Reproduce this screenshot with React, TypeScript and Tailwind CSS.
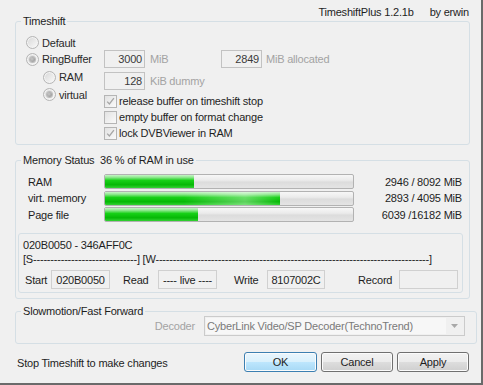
import React from "react";

function Radio({ checked }: { checked?: boolean }) {
  return (
    <span className="flex h-[13px] w-[13px] shrink-0 items-center justify-center rounded-full border border-[#b5b5b5] bg-[linear-gradient(135deg,#d6d6d6,#fbfbfb)] shadow-[inset_0_0_0_1px_#f4f4f4]">
      {checked && (
        <span className="h-[5px] w-[5px] rounded-full bg-[radial-gradient(circle_at_40%_40%,#c8c8c8,#8e8e8e)] shadow-[0_0_0_1px_#bdbdbd]" />
      )}
    </span>
  );
}

function Check({ checked }: { checked?: boolean }) {
  return (
    <span className="flex h-[13px] w-[13px] shrink-0 items-center justify-center border border-[#b5b5b5] bg-[linear-gradient(135deg,#e2e2e2,#fafafa)]">
      {checked && (
        <svg width="9" height="9" viewBox="0 0 9 9">
          <path d="M1.2 4.6 L3.4 7 L7.9 1.2" fill="none" stroke="#a6a6a6" strokeWidth="1.3" />
        </svg>
      )}
    </span>
  );
}

function Group({
  label,
  className,
  children,
}: {
  label?: string;
  className: string;
  children?: React.ReactNode;
}) {
  return (
    <div className={`relative shrink-0 rounded-[3px] border border-[#d5dfe5] ${className}`}>
      {label && (
        <span className="absolute left-[5px] top-[-8px] whitespace-pre bg-[#f0f0f0] px-[2px] leading-[14px] text-[#1e1e1e]">
          {label}
        </span>
      )}
      {children}
    </div>
  );
}

const bars = [
  { label: "RAM", pct: 36, value: "2946 / 8092 MiB", glow: false },
  { label: "virt. memory", pct: 70.6, value: "2893 / 4095 MiB", glow: true },
  { label: "Page file", pct: 37.3, value: "6039 /16182 MiB", glow: false },
];

function Button({ label, primary, w }: { label: string; primary?: boolean; w: string }) {
  const base =
    "flex h-[20px] items-center justify-center rounded-[3px] border text-[#1e1e1e] shadow-[inset_0_0_0_1px_#fbfbfb] " + w;
  const skin = primary
    ? "border-[#3c7fb1] bg-[linear-gradient(#eaf6fd_0%,#d9f0fc_50%,#bee6fd_50%,#a7d9f5_100%)]"
    : "border-[#707070] bg-[linear-gradient(#f2f2f2_0%,#ebebeb_50%,#dddddd_50%,#cfcfcf_100%)]";
  return <div className={`${base} ${skin}`}>{label}</div>;
}

export default function App() {
  const line = "[S" + "-".repeat(30) + "] [W" + "-".repeat(79) + "]";
  return (
    <div className="h-[385px] w-[483px] overflow-hidden border-b-2 border-r-2 border-[#6a6a6a] bg-[#f0f0f0] font-['Liberation_Sans',Arial,sans-serif] text-[11px] leading-[14px] tracking-[-0.2px] text-[#1e1e1e]">
      <div className="flex flex-col pl-[15px]">
        {/* Title */}
        <div className="flex h-[21px] w-[454px] justify-end pt-[5px]">
          <span>TimeshiftPlus 1.2.1b</span>
          <span className="ml-[16px]">by erwin</span>
        </div>

        {/* Timeshift */}
        <Group label="Timeshift" className="h-[124px] w-[455px]">
          <div className="flex flex-col pl-[10px] pt-[13px]">
            <div className="flex h-[15px] items-center">
              <Radio />
              <span className="ml-[3px] text-[#2a2a2a]">Default</span>
            </div>
            <div className="flex">
              <div className="flex w-[78px] flex-col">
                <div className="flex h-[18px] items-center">
                  <Radio checked />
                  <span className="ml-[3px] text-[#2a2a2a]">RingBuffer</span>
                </div>
                <div className="flex h-[18px] items-center pl-[17px]">
                  <Radio />
                  <span className="ml-[3px] text-[#2a2a2a]">RAM</span>
                </div>
                <div className="flex h-[17px] items-center pl-[17px]">
                  <Radio checked />
                  <span className="ml-[3px] text-[#2a2a2a]">virtual</span>
                </div>
              </div>
              <div className="flex flex-col">
                <div className="flex h-[18px] items-center">
                  <span className="flex h-[18px] w-[41px] items-center justify-end border border-[#c2c2c2] pr-[2px] text-[#3a3a3a]">
                    3000
                  </span>
                  <span className="ml-[5px] w-[71px] text-[#a3a3a3]">MiB</span>
                  <span className="flex h-[18px] w-[41px] items-center justify-end border border-[#c2c2c2] pr-[2px] text-[#3a3a3a]">
                    2849
                  </span>
                  <span className="ml-[4px] text-[#a3a3a3]">MiB allocated</span>
                </div>
                <div className="mt-[4px] flex h-[18px] items-center">
                  <span className="flex h-[18px] w-[41px] items-center justify-end border border-[#c2c2c2] pr-[2px] text-[#3a3a3a]">
                    128
                  </span>
                  <span className="ml-[5px] text-[#a3a3a3]">KiB dummy</span>
                </div>
                <div className="mt-[3px] flex h-[16px] items-center">
                  <Check checked />
                  <span className="ml-[2px]">release buffer on timeshift stop</span>
                </div>
                <div className="flex h-[16px] items-center">
                  <Check />
                  <span className="ml-[2px]">empty buffer on format change</span>
                </div>
                <div className="flex h-[16px] items-center">
                  <Check checked />
                  <span className="ml-[2px]">lock DVBViewer in RAM</span>
                </div>
              </div>
            </div>
          </div>
        </Group>

        {/* Memory Status */}
        <Group label="Memory Status  36 % of RAM in use" className="mt-[15px] h-[139px] w-[455px]">
          <div className="flex flex-col gap-[1.5px] pt-[13px]">
            {bars.map((b) => (
              <div key={b.label} className="flex h-[15px] items-center">
                <span className="w-[88px] pl-[12px]">{b.label}</span>
                <div className="flex h-[15px] w-[250px] overflow-hidden rounded-[2px] border border-[#b2b2b2] bg-[linear-gradient(#f7f7f7_0%,#ebebeb_40%,#dcdcdc_55%,#e4e4e4_100%)]">
                  <div
                    className="relative h-full bg-[linear-gradient(#c8f4c8_0%,#8de88d_18%,#17d017_42%,#06b806_75%,#34d234_100%)]"
                    style={{ width: `${b.pct}%` }}
                  >
                    {b.glow && (
                      <div className="absolute inset-0 bg-[linear-gradient(90deg,transparent_45%,rgba(255,255,255,0.35)_80%,transparent_100%)]" />
                    )}
                  </div>
                </div>
                <span className="flex-1 pr-[7px] text-right">{b.value}</span>
              </div>
            ))}
          </div>

          <div className="ml-[2px] mt-[11px] h-[60px] w-[445px] rounded-[3px] border border-[#d5dfe5]">
            <div className="flex flex-col pl-[4px] pt-[4px]">
              <div className="h-[14px]">020B0050 - 346AFF0C</div>
              <div className="h-[14px] whitespace-pre">{line}</div>
              <div className="mt-[4px] flex h-[19px] items-center pl-[2px]">
                <span className="w-[26px]">Start</span>
                <span className="flex h-[19px] w-[59px] items-center justify-center border border-[#d0d0d0]">020B0050</span>
                <span className="ml-[13px] w-[35px]">Read</span>
                <span className="flex h-[19px] w-[59px] items-center justify-center border border-[#d0d0d0]">---- live ----</span>
                <span className="ml-[17px] w-[33px]">Write</span>
                <span className="flex h-[19px] w-[58px] items-center justify-center border border-[#d0d0d0]">8107002C</span>
                <span className="ml-[33px] w-[41px]">Record</span>
                <span className="flex h-[19px] w-[59px] items-center justify-center border border-[#d0d0d0]"></span>
              </div>
            </div>
          </div>
        </Group>

        {/* Slowmotion */}
        <Group label="Slowmotion/Fast Forward" className="mt-[12px] h-[33px] w-[462px]">
          <div className="flex items-center justify-end pr-[11px] pt-[4px]">
            <span className="mr-[9px] text-[#a3a3a3]">Decoder</span>
            <div className="flex h-[20px] w-[261px] border border-[#cbcbcb] bg-[#f0f0f0] p-[1px]">
              <div className="flex flex-1 items-center bg-[#f7f7f7] pl-[1px] text-[#7a7a7a]">
                CyberLink Video/SP Decoder(TechnoTrend)
              </div>
              <div className="flex w-[17px] items-center justify-center">
                <svg width="7" height="4" viewBox="0 0 7 4">
                  <path d="M0 0 L7 0 L3.5 4 Z" fill="#a8a8a8" />
                </svg>
              </div>
            </div>
          </div>
        </Group>

        {/* Bottom row */}
        <div className="mt-[8px] flex h-[20px] w-[454px] items-start justify-between">
          <span className="ml-[2px] mt-[4px]">Stop Timeshift to make changes</span>
          <div className="flex gap-[4px]">
            <Button label="OK" primary w="w-[73px]" />
            <Button label="Cancel" w="w-[72px]" />
            <Button label="Apply" w="w-[72px]" />
          </div>
        </div>
      </div>
    </div>
  );
}
